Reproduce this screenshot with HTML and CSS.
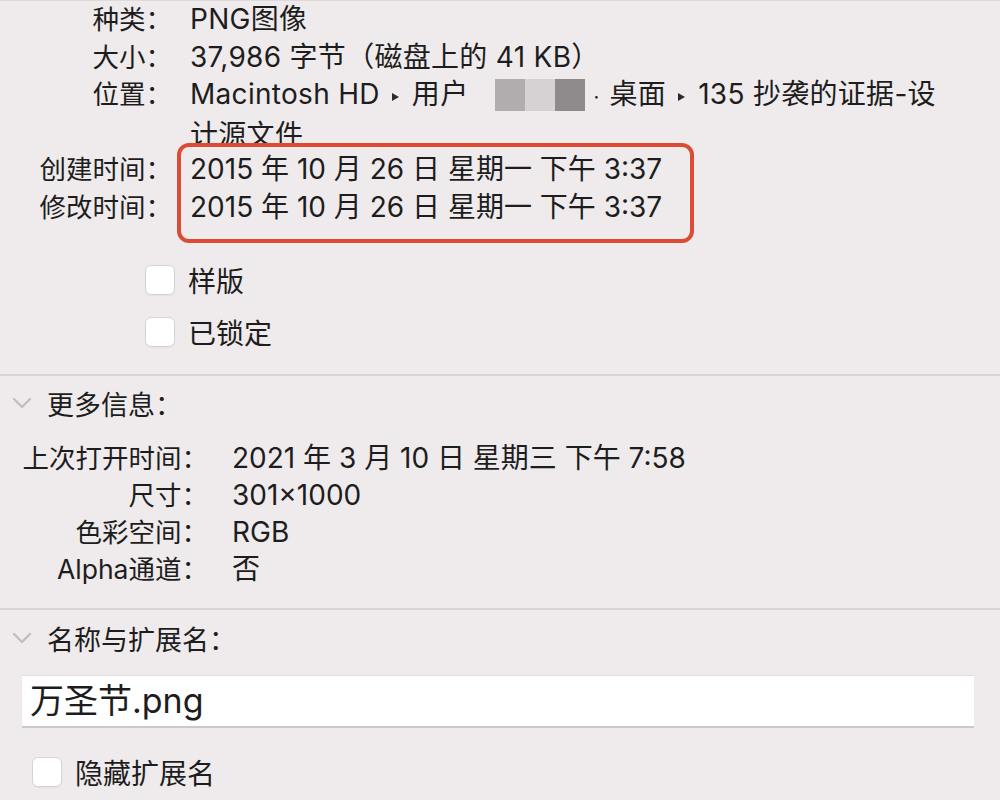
FILE: index.html
```html
<!DOCTYPE html>
<html lang="zh-CN">
<head>
<meta charset="utf-8">
<title>简介</title>
<link rel="stylesheet" href="styles.css">
</head>
<body>
<div class="info">
  <div class="k">种类：</div><div class="v">PNG图像</div>
  <div class="k">大小：</div><div class="v">37,986 字节（磁盘上的 41 KB）</div>
  <div class="k">位置：</div>
  <div class="v">Macintosh HD<span class="arr"></span>用户<span class="blur"><span class="px px1"></span><span class="px px2"></span><span class="px px3"></span></span><span class="dot">·</span>桌面<span class="arr"></span>135 抄袭的证据-设<br>计源文件</div>
</div>
<div class="dates">
  <div class="k">创建时间：</div><div class="v">2015 年 10 月 26 日 星期一 下午 3:37</div>
  <div class="k">修改时间：</div><div class="v">2015 年 10 月 26 日 星期一 下午 3:37</div>
  <div class="mark"></div>
</div>
<div class="opts">
  <div class="opt"><span class="cb"></span><span>样版</span></div>
  <div class="opt"><span class="cb"></span><span>已锁定</span></div>
</div>
<div class="sep"></div>
<div class="head">
  <svg class="chev" width="20" height="12" viewBox="0 0 20 12"><path d="M2 2 L10 10 L18 2" fill="none" stroke="#c2bebf" stroke-width="2.4" stroke-linecap="round" stroke-linejoin="round"/></svg>
  <span>更多信息：</span>
</div>
<div class="more">
  <div class="k">上次打开时间：</div><div class="v">2021 年 3 月 10 日 星期三 下午 7:58</div>
  <div class="k">尺寸：</div><div class="v">301×1000</div>
  <div class="k">色彩空间：</div><div class="v">RGB</div>
  <div class="k">Alpha通道：</div><div class="v">否</div>
</div>
<div class="sep sep2"></div>
<div class="head head2">
  <svg class="chev" width="20" height="12" viewBox="0 0 20 12"><path d="M2 2 L10 10 L18 2" fill="none" stroke="#c2bebf" stroke-width="2.4" stroke-linecap="round" stroke-linejoin="round"/></svg>
  <span>名称与扩展名：</span>
</div>
<div class="field">万圣节.png</div>
<div class="opt hide"><span class="cb"></span><span>隐藏扩展名</span></div>
</body>
</html>
```
FILE: styles.css
```css
html, body {
  margin: 0;
  padding: 0;
}
body {
  width: 1000px;
  height: 800px;
  overflow: hidden;
  background: #efebec;
  border-top: 1px solid #dedadb;
  box-sizing: border-box;
  font-family: "Inter", "Noto Sans CJK SC", sans-serif;
  font-size: 28px;
  color: #1d1d1d;
}
.info, .dates {
  display: grid;
  grid-template-columns: 172px 1fr;
  column-gap: 18px;
  line-height: 37.5px;
}
.k {
  text-align: right;
  white-space: nowrap;
  font-size: 26.5px;
}
.v {
  white-space: nowrap;
}
.info .v {
  letter-spacing: 0.3px;
}
.arr {
  display: inline-block;
  width: 0;
  height: 0;
  border-left: 7px solid #2a2a2a;
  border-top: 4px solid transparent;
  border-bottom: 4px solid transparent;
  margin: 0 13px 0 12px;
  vertical-align: 3px;
}
.blur {
  display: inline-flex;
  margin-left: 27px;
  vertical-align: -7px;
  height: 32px;
}
.px {
  display: inline-block;
  width: 30px;
  height: 32px;
}
.px1 { background: #b1acad; }
.px2 { background: #d6d2d3; }
.px3 { background: #8f8a8b; }
.dot {
  margin: 0 10px 0 8px;
  font-size: 20px;
}
.dates {
  position: relative;
  margin-top: -11px;
  padding: 8px 0 17px;
  background: #efebec;
}
.mark {
  position: absolute;
  left: 177px;
  top: 0;
  width: 517px;
  height: 100px;
  box-sizing: border-box;
  border: 4px solid #dc4b34;
  border-radius: 12px;
}
.opts {
  padding-left: 145px;
  margin-top: 22px;
  display: flex;
  flex-direction: column;
  gap: 22px;
}
.opt {
  display: flex;
  align-items: center;
  gap: 13px;
  height: 30px;
}
.cb {
  width: 30px;
  height: 30px;
  box-sizing: border-box;
  background: #ffffff;
  border: 1px solid #d7d3d4;
  border-radius: 6px;
  box-shadow: 0 1px 1px rgba(0, 0, 0, 0.04);
}
.sep {
  height: 2px;
  background: #d8d4d5;
  margin-top: 27px;
}
.sep2 {
  margin-top: 20px;
}
.head {
  display: flex;
  align-items: center;
  height: 40px;
  margin-top: 7px;
  padding-left: 12px;
  gap: 15px;
  font-size: 27px;
}
.head2 {
  margin-top: 8px;
}
.more {
  display: grid;
  grid-template-columns: 208px 1fr;
  column-gap: 24px;
  line-height: 37px;
  margin-top: 17px;
}
.field {
  margin: 17px 26px 0 22px;
  height: 53px;
  box-sizing: border-box;
  background: #ffffff;
  border-top: 1px solid #e2dedf;
  border-bottom: 2px solid #cdc9ca;
  padding-left: 8px;
  font-size: 34px;
  line-height: 50px;
}
.hide {
  margin-top: 29px;
  padding-left: 32px;
  font-size: 28px;
}
```
